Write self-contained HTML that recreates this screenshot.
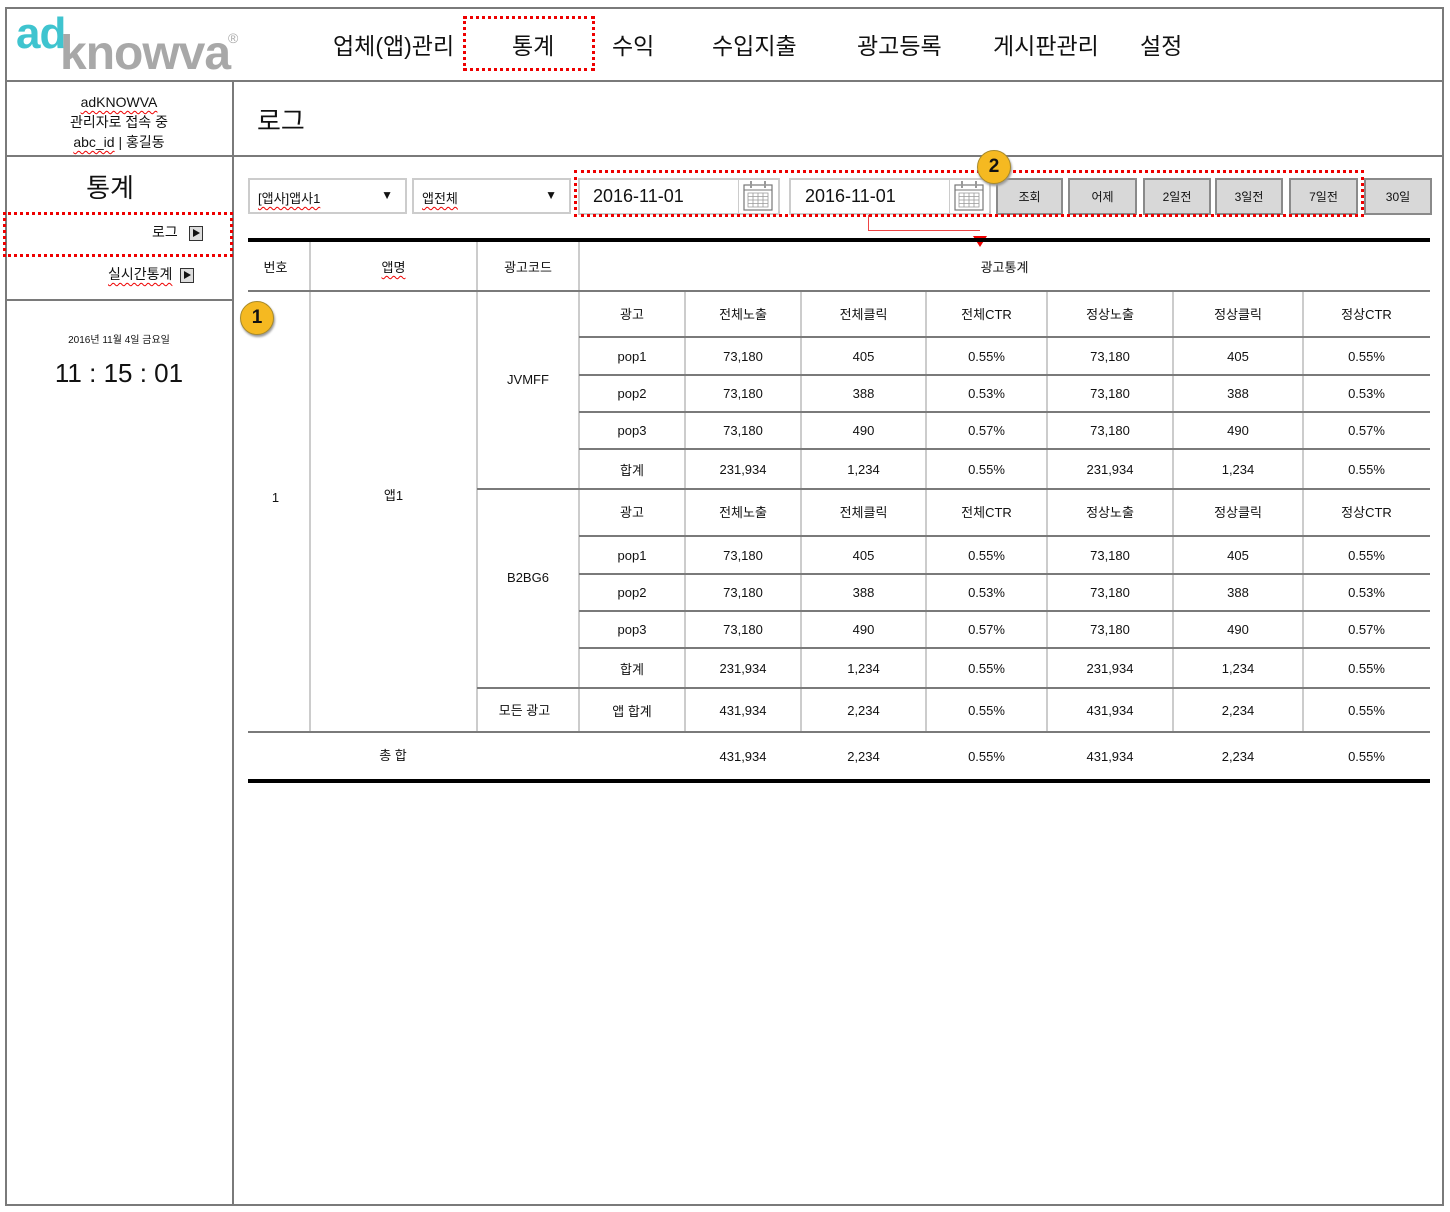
<!DOCTYPE html>
<html><head><meta charset="utf-8"><style>
*{margin:0;padding:0;box-sizing:border-box}
body{width:1450px;height:1212px;background:#fff;position:relative;overflow:hidden;font-family:"Liberation Sans","Noto Sans CJK KR",sans-serif;color:#111}
.a{position:absolute}
.h{position:absolute;height:2px;background:#7a7a7a}
.v{position:absolute;width:2px;background:#ccc}
.nav{position:absolute;top:27px;font-size:23px;color:#111}
.r{position:absolute;left:579px;display:flex;font-size:13px;align-items:center}
.r span{text-align:center}
.r span:nth-child(1){width:106px}.r span:nth-child(2){width:116px}.r span:nth-child(3){width:125px}.r span:nth-child(4){width:121px}.r span:nth-child(5){width:126px}.r span:nth-child(6){width:130px}.r span:nth-child(7){width:127px}
.c{position:absolute;font-size:13px;text-align:center}
.btn{position:absolute;top:178px;height:37px;background:#d8d8d8;border:2px solid #8a8a8a;font-size:12px;display:flex;align-items:center;justify-content:center}
.red{position:absolute;border:3px dotted #e00}
.badge{position:absolute;width:34px;height:34px;border-radius:50%;background:#f5b921;border:1px solid #a88a2a;box-shadow:1px 2px 2px #999;font-weight:bold;font-size:19px;display:flex;align-items:center;justify-content:center}
.sq{display:inline-block;width:14px;height:15px;border:1.5px solid #333;background:#ddd;position:relative;vertical-align:middle}
.sq:after{content:"";position:absolute;left:3px;top:2px;border-left:7px solid #111;border-top:4.5px solid transparent;border-bottom:4.5px solid transparent}
.wv{text-decoration:underline wavy #e00;text-underline-offset:3px;text-decoration-thickness:1px}
</style></head><body>
<div class="a" style="left:5px;top:7px;width:1439px;height:1199px;border:2px solid #7a7a7a"></div>
<div class="h" style="left:5px;top:80px;width:1439px"></div>
<div class="h" style="left:5px;top:155px;width:1439px"></div>
<div class="a" style="left:232px;top:81px;width:2px;height:1124px;background:#7a7a7a"></div>
<div class="h" style="left:5px;top:299px;width:228px"></div>
<div class="a" style="left:16px;top:9px;font-size:44px;font-weight:bold;color:#3fc4cf;letter-spacing:-1px">ad</div>
<div class="a" style="left:60px;top:26px;font-size:48px;font-weight:bold;color:#a8a8a8;letter-spacing:-1px">knowva</div>
<div class="a" style="left:228px;top:30px;font-size:14px;color:#aaa">®</div>
<div class="nav" style="left:333px">업체(앱)관리</div>
<div class="nav" style="left:512px">통계</div>
<div class="nav" style="left:612px">수익</div>
<div class="nav" style="left:712px">수입지출</div>
<div class="nav" style="left:857px">광고등록</div>
<div class="nav" style="left:993px">게시판관리</div>
<div class="nav" style="left:1140px">설정</div>
<div class="red" style="left:463px;top:16px;width:132px;height:55px"></div>
<div class="a" style="left:5px;top:92px;width:228px;text-align:center;font-size:14px;line-height:20px"><span class="wv">adKNOWVA</span><br>관리자로 접속 중<br><span class="wv">abc_id</span> | 홍길동</div>
<div class="a" style="left:5px;top:168px;width:210px;text-align:center;font-size:26px">통계</div>
<div class="red" style="left:3px;top:212px;width:230px;height:45px"></div>
<div class="a" style="left:152px;top:222px;font-size:14px">로그 &nbsp;&nbsp;<span class="sq"></span></div>
<div class="a" style="left:108px;top:264px;font-size:14px"><span class="wv">실시간통계</span> &nbsp;<span class="sq"></span></div>
<div class="a" style="left:5px;top:331px;width:228px;text-align:center;font-size:10px">2016년 11월 4일 금요일</div>
<div class="a" style="left:5px;top:358px;width:228px;text-align:center;font-size:26px">11 : 15 : 01</div>
<div class="a" style="left:257px;top:101px;font-size:26px">로그</div>
<div class="a" style="left:248px;top:178px;width:159px;height:36px;border:2px solid #ccc;font-size:13px;padding:8px 8px"><span class="wv">[앱사]앱사1</span><span style="position:absolute;right:12px;top:8px;font-size:12px">▼</span></div>
<div class="a" style="left:412px;top:178px;width:159px;height:36px;border:2px solid #ccc;font-size:13px;padding:8px 8px"><span class="wv">앱전체</span><span style="position:absolute;right:12px;top:8px;font-size:12px">▼</span></div>
<div class="a" style="left:578px;top:178px;width:202px;height:37px;border:2px solid #ccc;font-size:18px;padding:6px 13px">2016-11-01</div>
<div class="a" style="left:789px;top:178px;width:202px;height:37px;border:2px solid #ccc;font-size:18px;padding:6px 14px">2016-11-01</div>
<svg class="a" style="left:741px;top:180px" width="34" height="32" viewBox="0 0 34 32"><rect x="3" y="5" width="28" height="25" fill="#fff" stroke="#777" stroke-width="1.2"/><line x1="3" y1="10" x2="31" y2="10" stroke="#777"/><path d="M7 13h20v14H7zM7 16.5h20M7 20h20M7 23.5h20M12 13v14M17 13v14M22 13v14" fill="none" stroke="#999" stroke-width="0.8"/><rect x="9" y="1" width="2" height="7" fill="#999"/><rect x="23" y="1" width="2" height="7" fill="#999"/></svg>
<svg class="a" style="left:952px;top:180px" width="34" height="32" viewBox="0 0 34 32"><rect x="3" y="5" width="28" height="25" fill="#fff" stroke="#777" stroke-width="1.2"/><line x1="3" y1="10" x2="31" y2="10" stroke="#777"/><path d="M7 13h20v14H7zM7 16.5h20M7 20h20M7 23.5h20M12 13v14M17 13v14M22 13v14" fill="none" stroke="#999" stroke-width="0.8"/><rect x="9" y="1" width="2" height="7" fill="#999"/><rect x="23" y="1" width="2" height="7" fill="#999"/></svg>
<div class="a" style="left:738px;top:180px;width:1px;height:33px;background:#ccc"></div>
<div class="a" style="left:949px;top:180px;width:1px;height:33px;background:#ccc"></div>
<div class="btn" style="left:996px;width:67px">조회</div>
<div class="btn" style="left:1068px;width:69px">어제</div>
<div class="btn" style="left:1143px;width:68px">2일전</div>
<div class="btn" style="left:1215px;width:68px">3일전</div>
<div class="btn" style="left:1289px;width:69px">7일전</div>
<div class="btn" style="left:1364px;width:68px">30일</div>
<div class="red" style="left:574px;top:170px;width:790px;height:47px"></div>
<div class="badge" style="left:977px;top:150px">2</div>
<div class="a" style="left:868px;top:215px;width:1px;height:16px;background:#e44"></div>
<div class="a" style="left:868px;top:230px;width:112px;height:1px;background:#e44"></div>
<div class="a" style="left:973px;top:236px;border-left:7px solid transparent;border-right:7px solid transparent;border-top:11px solid #e00"></div>
<div class="a" style="left:248px;top:238px;width:1182px;height:4px;background:#000"></div>
<div class="a" style="left:248px;top:779px;width:1182px;height:4px;background:#000"></div>
<div class="v" style="left:309px;top:242px;height:490px"></div>
<div class="v" style="left:476px;top:242px;height:490px"></div>
<div class="v" style="left:578px;top:242px;height:490px"></div>
<div class="v" style="left:684px;top:291px;height:441px"></div>
<div class="v" style="left:800px;top:291px;height:441px"></div>
<div class="v" style="left:925px;top:291px;height:441px"></div>
<div class="v" style="left:1046px;top:291px;height:441px"></div>
<div class="v" style="left:1172px;top:291px;height:441px"></div>
<div class="v" style="left:1302px;top:291px;height:441px"></div>
<div class="h" style="left:248px;top:290px;width:1182px"></div>
<div class="h" style="left:579px;top:336px;width:851px"></div>
<div class="h" style="left:579px;top:374px;width:851px"></div>
<div class="h" style="left:579px;top:411px;width:851px"></div>
<div class="h" style="left:579px;top:448px;width:851px"></div>
<div class="h" style="left:477px;top:488px;width:953px"></div>
<div class="h" style="left:579px;top:535px;width:851px"></div>
<div class="h" style="left:579px;top:573px;width:851px"></div>
<div class="h" style="left:579px;top:610px;width:851px"></div>
<div class="h" style="left:579px;top:647px;width:851px"></div>
<div class="h" style="left:477px;top:687px;width:953px"></div>
<div class="h" style="left:248px;top:731px;width:1182px"></div>
<div class="c" style="left:248px;top:257px;width:55px">번호</div>
<div class="c" style="left:310px;top:257px;width:167px"><span class="wv">앱명</span></div>
<div class="c" style="left:477px;top:257px;width:102px">광고코드</div>
<div class="c" style="left:579px;top:257px;width:851px">광고통계</div>
<div class="badge" style="left:240px;top:301px">1</div>
<div class="c" style="left:248px;top:490px;width:55px">1</div>
<div class="c" style="left:310px;top:485px;width:167px">앱1</div>
<div class="c" style="left:477px;top:372px;width:102px">JVMFF</div>
<div class="c" style="left:477px;top:570px;width:102px">B2BG6</div>
<div class="c" style="left:477px;top:700px;width:95px">모든 광고</div>
<div class="c" style="left:248px;top:745px;width:290px">총 합</div>
<div class="r" style="top:292px;height:42px"><span>광고</span><span>전체노출</span><span>전체클릭</span><span>전체CTR</span><span>정상노출</span><span>정상클릭</span><span>정상CTR</span></div>
<div class="r" style="top:338px;height:36px"><span>pop1</span><span>73,180</span><span>405</span><span>0.55%</span><span>73,180</span><span>405</span><span>0.55%</span></div>
<div class="r" style="top:376px;height:35px"><span>pop2</span><span>73,180</span><span>388</span><span>0.53%</span><span>73,180</span><span>388</span><span>0.53%</span></div>
<div class="r" style="top:413px;height:35px"><span>pop3</span><span>73,180</span><span>490</span><span>0.57%</span><span>73,180</span><span>490</span><span>0.57%</span></div>
<div class="r" style="top:450px;height:38px"><span>합계</span><span>231,934</span><span>1,234</span><span>0.55%</span><span>231,934</span><span>1,234</span><span>0.55%</span></div>
<div class="r" style="top:490px;height:43px"><span>광고</span><span>전체노출</span><span>전체클릭</span><span>전체CTR</span><span>정상노출</span><span>정상클릭</span><span>정상CTR</span></div>
<div class="r" style="top:537px;height:36px"><span>pop1</span><span>73,180</span><span>405</span><span>0.55%</span><span>73,180</span><span>405</span><span>0.55%</span></div>
<div class="r" style="top:575px;height:35px"><span>pop2</span><span>73,180</span><span>388</span><span>0.53%</span><span>73,180</span><span>388</span><span>0.53%</span></div>
<div class="r" style="top:612px;height:35px"><span>pop3</span><span>73,180</span><span>490</span><span>0.57%</span><span>73,180</span><span>490</span><span>0.57%</span></div>
<div class="r" style="top:649px;height:38px"><span>합계</span><span>231,934</span><span>1,234</span><span>0.55%</span><span>231,934</span><span>1,234</span><span>0.55%</span></div>
<div class="r" style="top:689px;height:42px"><span>앱 합계</span><span>431,934</span><span>2,234</span><span>0.55%</span><span>431,934</span><span>2,234</span><span>0.55%</span></div>
<div class="r" style="top:733px;height:46px"><span></span><span>431,934</span><span>2,234</span><span>0.55%</span><span>431,934</span><span>2,234</span><span>0.55%</span></div>
</body></html>
